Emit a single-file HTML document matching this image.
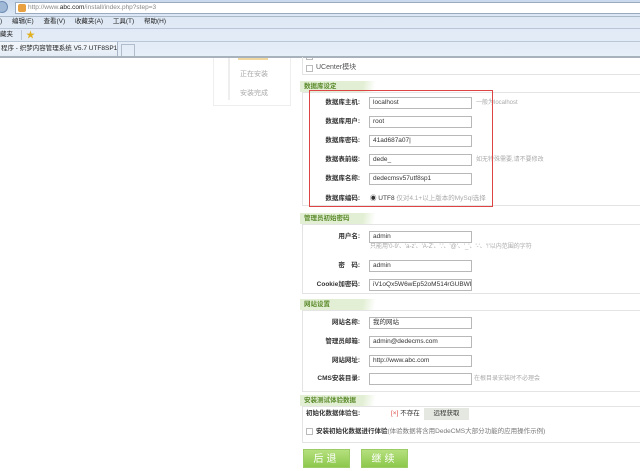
<!DOCTYPE html>
<html><head><meta charset="utf-8"><style>
*{margin:0;padding:0;box-sizing:border-box}
body{width:640px;height:471px;overflow:hidden;background:#fff;position:relative;font-family:"Liberation Sans","Noto Sans CJK SC",sans-serif;font-size:7px;color:#333;line-height:10px}
.a{position:absolute;white-space:nowrap}
.inp{position:absolute;height:12px;border:1px solid #b8b8b8;background:#fff;font-size:6.5px;line-height:10px;padding-left:3px;color:#333;white-space:nowrap}
.lb{position:absolute;width:60px;text-align:right;font-weight:bold;font-size:6.5px;color:#333;line-height:12px;white-space:nowrap}
.h{position:absolute;left:300px;height:11px;width:78px;background:linear-gradient(100deg,#e3efd5 80%,#fff 95%);color:#5a8a2a;font-weight:bold;font-size:6.5px;line-height:11px;padding-left:4px}
.box{position:absolute;left:302px;right:0;border:1px solid #e4e4e4;border-right:none}
.hint{position:absolute;color:#aaa;font-size:6px;line-height:12px;white-space:nowrap}
.btn{position:absolute;top:449px;width:47px;height:19px;background:linear-gradient(#b5e07e,#8cc84b);color:#fff;font-size:10px;text-align:center;line-height:19px;letter-spacing:3px;border:1px solid #9bcc66}
</style></head><body>
<div class="a" style="left:0;top:0;width:640px;height:57px;background:linear-gradient(#dbe6f3,#e6eef8)"></div>
<div class="a" style="left:0;top:0;width:640px;height:16px;background:linear-gradient(#c9d9ec,#dde8f5)"></div>
<div class="a" style="left:-4px;top:1px;width:12px;height:12px;border-radius:50%;background:#9fb8d6;border:1px solid #6d8bb3"></div>
<div class="a" style="left:15px;top:2px;width:630px;height:12px;background:#fff;border:1px solid #9aaabf"></div>
<div class="a" style="left:18px;top:4px;width:8px;height:8px;background:#e8a040;border-radius:2px"></div>
<div class="a" style="left:28px;top:3px;font-size:6.5px;color:#888;line-height:10px">http://www.<span style="color:#222">abc.com</span>/install/index.php?step=3</div>
<div class="a" style="left:0;top:16px;width:640px;height:1px;background:#aab8c8"></div>
<div class="a" style="left:0;top:17px;font-size:6.5px;line-height:10px;color:#222;word-spacing:8px">) 编辑(E) 查看(V) 收藏夹(A) 工具(T) 帮助(H)</div>
<div class="a" style="left:0;top:28px;width:640px;height:1px;background:#b8c6d6"></div>
<div class="a" style="left:0;top:30px;font-size:6.5px;line-height:10px;color:#222">藏夹</div>
<div class="a" style="left:21px;top:30px;width:1px;height:10px;background:#b8c6d6"></div>
<div class="a" style="left:26px;top:30px;font-size:9px;color:#e0b020;line-height:10px">★</div>
<div class="a" style="left:0;top:41px;width:640px;height:1px;background:#b8c6d6"></div>
<div class="a" style="left:0;top:42px;width:118px;height:15px;background:linear-gradient(#f4f8fc,#e2eaf4);border-right:1px solid #a8b6c6;font-size:6.5px;line-height:14px;color:#222;padding-left:1px">程序 - 织梦内容管理系统 V5.7 UTF8SP1</div>
<div class="a" style="left:121px;top:44px;width:14px;height:12px;border:1px solid #b0bccb;border-bottom:none"></div>
<div class="a" style="left:0;top:56px;width:640px;height:2px;background:#a8b2bc"></div>

<div class="a" style="left:213px;top:58px;width:78px;height:48px;border:1px solid #eee;border-top:none"></div>
<div class="a" style="left:228px;top:58px;width:2px;height:42px;background:#eee"></div>
<div class="a" style="left:238px;top:58px;width:30px;height:2px;background:#f0d8a0"></div>
<div class="a" style="left:240px;top:70px;color:#aaa">正在安装</div>
<div class="a" style="left:240px;top:89px;color:#aaa">安装完成</div>

<div class="box" style="top:57px;height:18px;border-top:none"></div>
<div class="a" style="left:306px;top:58px;width:7px;height:2px;border:1px solid #bbb;border-top:none"></div>
<div class="a" style="left:306px;top:65px;width:7px;height:7px;border:1px solid #bbb"></div>
<div class="a" style="left:316px;top:63px;color:#555">UCenter模块</div>

<div class="h" style="top:81px">数据库设定</div>
<div class="box" style="top:92px;height:114px"></div>
<div class="lb" style="left:300px;top:97px">数据库主机:</div><div class="inp" style="left:369px;top:97px;width:103px">localhost</div><div class="hint" style="left:476px;top:97px">一般为localhost</div>
<div class="lb" style="left:300px;top:116px">数据库用户:</div><div class="inp" style="left:369px;top:116px;width:103px">root</div>
<div class="lb" style="left:300px;top:135px">数据库密码:</div><div class="inp" style="left:369px;top:135px;width:103px">41ad687a07|</div>
<div class="lb" style="left:300px;top:154px">数据表前缀:</div><div class="inp" style="left:369px;top:154px;width:103px">dede_</div><div class="hint" style="left:476px;top:154px">如无特殊需要,请不要修改</div>
<div class="lb" style="left:300px;top:173px">数据库名称:</div><div class="inp" style="left:369px;top:173px;width:103px">dedecmsv57utf8sp1</div>
<div class="lb" style="left:300px;top:193px">数据库编码:</div><div class="a" style="left:370px;top:193px;font-size:6.5px;line-height:12px">◉ UTF8 <span style="color:#aaa">仅对4.1+以上版本的MySql选择</span></div>
<div class="a" style="left:309px;top:90px;width:184px;height:117px;border:1.5px solid #d44"></div>

<div class="h" style="top:213px">管理员初始密码</div>
<div class="box" style="top:224px;height:70px"></div>
<div class="lb" style="left:300px;top:231px">用户名:</div><div class="inp" style="left:369px;top:231px;width:103px">admin</div>
<div class="hint" style="left:370px;top:241px">只能用'0-9'、'a-z'、'A-Z'、'.'、'@'、'_'、'-'、'!'以内范围的字符</div>
<div class="lb" style="left:300px;top:260px">密　码:</div><div class="inp" style="left:369px;top:260px;width:103px">admin</div>
<div class="lb" style="left:300px;top:279px">Cookie加密码:</div><div class="inp" style="left:369px;top:279px;width:103px;overflow:hidden">iV1oQx5W6wEp52oM514rGUBWPR8</div>

<div class="h" style="top:299px">网站设置</div>
<div class="box" style="top:310px;height:82px"></div>
<div class="lb" style="left:300px;top:317px">网站名称:</div><div class="inp" style="left:369px;top:317px;width:103px">我的网站</div>
<div class="lb" style="left:300px;top:336px">管理员邮箱:</div><div class="inp" style="left:369px;top:336px;width:103px">admin@dedecms.com</div>
<div class="lb" style="left:300px;top:355px">网站网址:</div><div class="inp" style="left:369px;top:355px;width:103px">http://www.abc.com</div>
<div class="lb" style="left:300px;top:373px">CMS安装目录:</div><div class="inp" style="left:369px;top:373px;width:103px"></div><div class="hint" style="left:474px;top:373px">在根目录安装时不必理会</div>

<div class="h" style="top:395px">安装测试体验数据</div>
<div class="box" style="top:406px;height:37px"></div>
<div class="a" style="left:306px;top:408px;font-weight:bold;font-size:6.5px;line-height:12px">初始化数据体验包:</div>
<div class="a" style="left:391px;top:408px;font-size:6.5px;line-height:12px"><span style="color:#d44">[×]</span> 不存在</div>
<div class="a" style="left:424px;top:408px;width:45px;height:12px;background:#e4e8e0;font-size:6.5px;line-height:12px;text-align:center">远程获取</div>
<div class="a" style="left:306px;top:428px;width:7px;height:7px;border:1px solid #bbb"></div>
<div class="a" style="left:316px;top:426px;font-size:6.5px;line-height:12px"><b>安装初始化数据进行体验</b><span style="color:#777">(体验数据将含用DedeCMS大部分功能的应用操作示例)</span></div>
<div class="btn" style="left:303px">后退</div>
<div class="btn" style="left:361px">继续</div>
</body></html>
